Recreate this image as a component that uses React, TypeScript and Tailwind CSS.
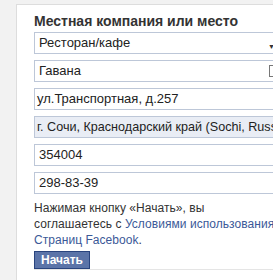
const fieldBase =
  "h-[22px] w-[260px] shrink-0 border border-[#bdc7d8] bg-white pl-[4px] text-[13px] leading-[20px] text-[#222] flex items-center";

export default function App() {
  return (
    <div className="h-[280px] w-[273px] overflow-hidden bg-[#f2f2f2] font-['Liberation_Sans',Arial,sans-serif]">
      <div className="ml-[16px] mt-[4px] h-[300px] w-[300px] border-l border-t border-[#dddddd] bg-white pl-[17px] pt-[8px]">
        <h2 className="text-[14px] font-bold leading-[16px] text-[#333]">
          Местная компания или место
        </h2>
        <div className="mt-[3px] flex flex-col gap-[6px]">
          <div className={fieldBase + " relative"}>
            Ресторан/кафе
            <span className="absolute left-[233px] top-[4px] text-[7px] text-[#333]">▼</span>
          </div>
          <div className={fieldBase + " relative"}>
            Гавана
            <span className="absolute left-[234px] top-[4px] h-[12px] w-[12px] border border-[#777] bg-white" />
          </div>
          <div className={fieldBase + " pl-[2px]!"}>ул.Транспортная, д.257</div>
          <div className={fieldBase + " bg-[#e9edf5]! pl-[2px]! text-[12.6px]! whitespace-nowrap"}>
            г. Сочи, Краснодарский край (Sochi, Russia)
          </div>
          <div className={fieldBase}>354004</div>
          <div className={fieldBase}>298-83-39</div>
        </div>
        <p className="mt-[6px] w-[250px] text-[12px] leading-[16px] tracking-[0.05px] text-[#333]">
          Нажимая кнопку «Начать», вы
          <br />
          <span className="whitespace-nowrap">
            соглашаетесь с <span className="text-[#3b5998]">Условиями использования</span>
          </span>
          <br />
          <span className="text-[#3b5998]">Страниц Facebook</span>.
        </p>
        <div className="mt-[3px] flex w-[260px] items-end border-b border-[#e5e5e5]">
          <button className="h-[18px] w-[56px] border border-[#29447e] bg-[#5b74a8] text-[12px] font-bold leading-[16px] text-white">
            Начать
          </button>
        </div>
      </div>
    </div>
  );
}
